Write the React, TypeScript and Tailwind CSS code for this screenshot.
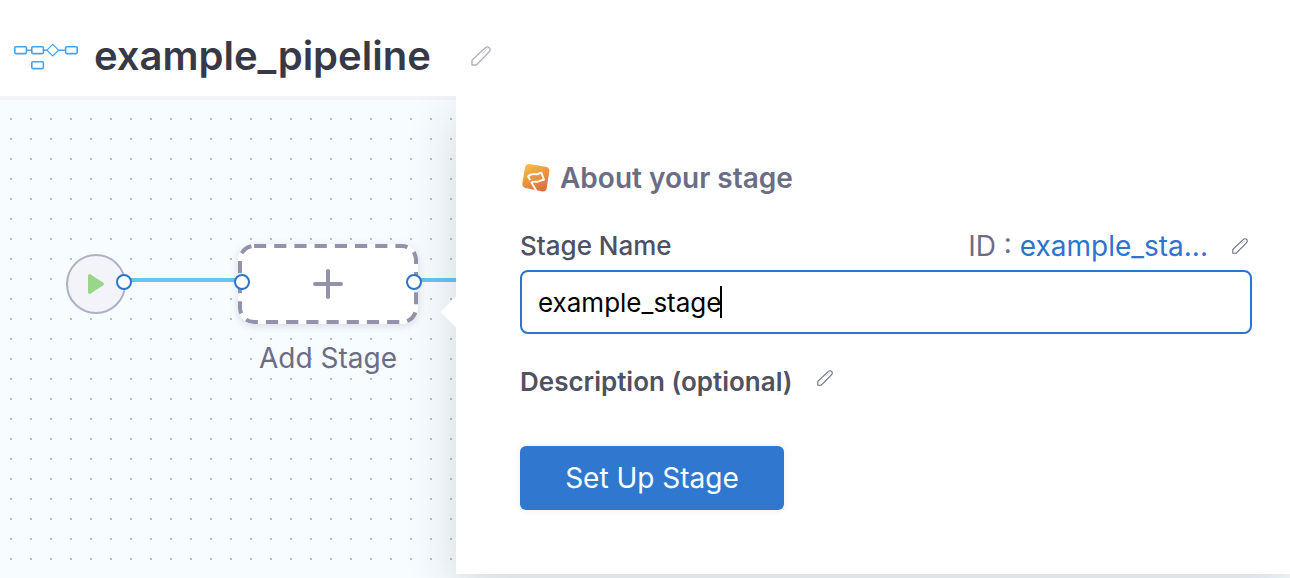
import { useState } from "react";

type PencilProps = {
  size: number;
  className?: string;
};

function Pencil({ size, className }: PencilProps) {
  return (
    <svg width={size} height={size} viewBox="0 0 20 20" fill="none" stroke="currentColor" strokeLinejoin="round" className={className}>
      <path d="M1 19V14.3L14.3 1.7a2.8 2.8 0 0 1 4 4L5.4 19Z" strokeWidth="1.4" />
      <path d="M11 8l4.6-4.6" strokeWidth="1" opacity="0.5" />
    </svg>
  );
}

function PipelineIcon() {
  return (
    <svg width="64" height="28" viewBox="0 0 64 28" fill="none" stroke="#45a3ee" strokeWidth="1.6" className="shrink-0">
      <rect x="0.8" y="4.8" width="11.6" height="6.8" rx="1" />
      <rect x="17.8" y="4.8" width="11.6" height="6.8" rx="1" />
      <rect x="51.6" y="4.8" width="11.6" height="6.8" rx="1" />
      <rect x="17.8" y="19.8" width="11.6" height="6.8" rx="1" />
      <path d="M38.8 2.4L44.6 8.2L38.8 14L33 8.2Z" strokeWidth="1.2" />
      <path d="M12.4 8.2H17.8M29.4 8.2H33M44.6 8.2H51.6" />
    </svg>
  );
}

function StageIcon() {
  return (
    <svg width="28" height="28" viewBox="0 0 28 28" fill="none" className="shrink-0">
      <defs>
        <linearGradient id="stage" x1="6" y1="0" x2="20" y2="28" gradientUnits="userSpaceOnUse">
          <stop stopColor="#f5bd48" />
          <stop offset="1" stopColor="#dc6c3c" />
        </linearGradient>
      </defs>
      <path d="M7.5 0.1L23.6 2.7Q27.6 3.4 27.3 7.4L24.7 24.3Q24 27.8 20.5 27.5L3.4 23.9Q0 23 0.3 19.5L3 3.7Q3.8 -0.3 7.5 0.1Z" fill="url(#stage)" />
      <path
        d="M14.2 26.5L9.4 18.6C12 16.8 13.8 18.2 16 17.6C18.5 17 19.5 15.9 22 15.7L19.3 8.6C17.4 8.9 16.8 10 14.8 10.2C11.6 10.4 8.8 8.9 6 12.6L7.8 15.4"
        stroke="#fff"
        strokeWidth="1.9"
        strokeLinejoin="round"
        strokeLinecap="round"
      />
    </svg>
  );
}

function Port({ className }: { className: string }) {
  return <span className={`absolute size-4 rounded-full border-2 border-[#2d74cc] bg-white ${className}`} />;
}

function StageNode() {
  return (
    <div className="w-[180px] mt-36 text-center">
      <button aria-label="Add Stage" className="relative block w-full h-20 rounded-2xl bg-white shadow-[0_2px_8px_rgba(96,97,112,0.2)]">
        <svg viewBox="0 0 180 80" fill="none" stroke="#9293ab" strokeWidth="4" className="w-full h-full">
          <rect x="2" y="2" width="176" height="76" rx="14" strokeDasharray="12.2 8" />
          <path d="M90 27v26M77 40h26" strokeLinecap="round" />
        </svg>
        <Port className="-left-1 top-[30px]" />
        <Port className="-right-1 top-[30px]" />
      </button>
      <p className="mt-[18px] text-[28px] leading-8 text-[#6b6d85]">Add Stage</p>
    </div>
  );
}

function App() {
  const [name, setName] = useState("example_stage");

  return (
    <div className="min-h-screen flex flex-col bg-white font-['Inter',sans-serif]">
      <header className="flex items-center h-24 pl-3.5 pt-4">
        <PipelineIcon />
        <h1 className="ml-4 text-[40px] leading-12 font-semibold text-[#383946]">example_pipeline</h1>
        <button aria-label="Edit pipeline name" className="ml-10 text-[#b0b1c4]">
          <Pencil size={20} />
        </button>
      </header>

      <main className="grow flex overflow-hidden bg-[#f6fcff] bg-[conic-gradient(from_270deg_at_2px_2px,#b9bec2_90deg,transparent_0)] bg-size-[20px_20px] bg-position-[10px_2px]">
        <section className="w-[456px] shrink-0 flex items-start pl-[66px] border-t-4 border-[#f3f3fa]">
          <div className="relative mt-[154px] size-[60px] shrink-0 rounded-full border-2 border-[#b0b1c4] bg-[#f3f3fa]">
            <svg viewBox="0 0 56 56" className="w-full h-full">
              <path d="M21.5 19.5L34.5 28L21.5 36.5Z" fill="#99d68a" stroke="#99d68a" strokeWidth="3" strokeLinejoin="round" />
            </svg>
            <Port className="-right-2 top-[18px]" />
          </div>
          <div className="grow h-1 mt-[178px] bg-[#65c5f0]" />
          <StageNode />
          <div className="w-[38px] h-1 mt-[178px] bg-[#65c5f0]" />
        </section>

        <aside className="relative grow self-start pt-16 pb-16 pl-16 pr-[38px] mb-1 bg-white shadow-[0_16px_48px_rgba(40,41,61,0.16)]">
          <span className="absolute -left-[11px] top-[205px] size-[22px] rotate-45 bg-white" />

          <div className="flex items-center gap-2.5 pl-0.5">
            <StageIcon />
            <h2 className="text-[28px] leading-9 font-semibold text-[#6b6d85]">About your stage</h2>
          </div>

          <div className="flex items-center mt-8 leading-9">
            <label htmlFor="stage-name" className="text-[26px] font-medium text-[#4f5162]">Stage Name</label>
            <span className="ml-auto text-[28px] text-[#6b6d85]">
              ID : <a href="#" className="text-[#2d74cc]">example_sta...</a>
            </span>
            <button aria-label="Edit ID" className="ml-6 mr-1 text-[#6b6d85]">
              <Pencil size={16} />
            </button>
          </div>

          <div className="relative mt-1.5">
            <input
              id="stage-name"
              type="text"
              value={name}
              onChange={(e) => setName(e.target.value)}
              className="block w-full h-16 px-4 rounded-lg border-2 border-[#2d74cc] bg-white text-[26px] text-black caret-transparent outline-none"
            />
            <span className="absolute left-[200px] top-4 w-0.5 h-8 bg-black" />
          </div>

          <div className="flex items-center mt-8">
            <h3 className="text-[26px] leading-8 font-semibold text-[#4f5162]">Description (optional)</h3>
            <button aria-label="Edit description" className="ml-6 mb-2 text-[#6b6d85]">
              <Pencil size={16} />
            </button>
          </div>

          <button className="block min-w-[264px] h-16 mt-12 px-10 rounded-md bg-[#3078cf] text-[28px] text-white shadow-[0_0_8px_rgba(40,41,61,0.08)]">
            Set Up Stage
          </button>
        </aside>
      </main>
    </div>
  );
}

export default App;
